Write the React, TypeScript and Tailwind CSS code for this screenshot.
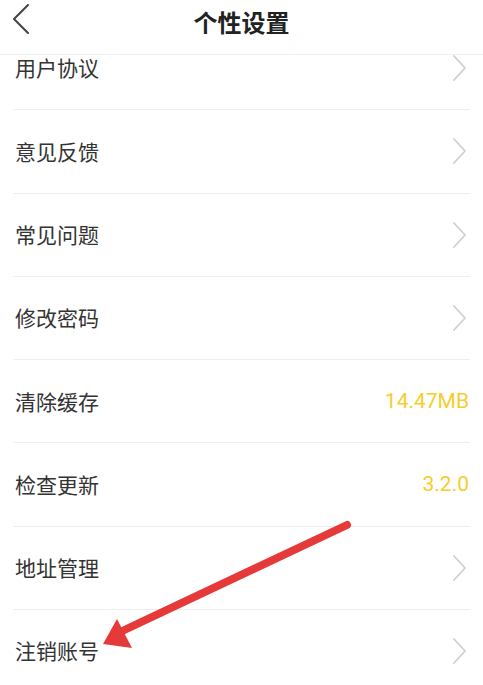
const rows = [
  { label: '用户协议' },
  { label: '意见反馈' },
  { label: '常见问题' },
  { label: '修改密码' },
  { label: '清除缓存', value: '14.47MB' },
  { label: '检查更新', value: '3.2.0' },
  { label: '地址管理' },
  { label: '注销账号' },
];

function Chevron({ left, className }: { left?: boolean; className?: string }) {
  return (
    <svg className={className} width="16" height="30" viewBox="0 0 16 30" fill="none">
      <polyline
        points={left ? '15,1 1,15 15,29' : '1,3 12,15 1,27'}
        stroke="currentColor"
        strokeWidth={left ? 2 : 1.8}
        strokeLinecap="round"
        strokeLinejoin="round"
      />
    </svg>
  );
}

export default function App() {
  return (
    <div
      className="relative w-[483px] h-[685px] bg-white overflow-hidden flex flex-col"
      style={{ fontFamily: '"Noto Sans CJK SC", Roboto, sans-serif' }}
    >
      {/* header */}
      <div className="relative z-10 h-[55px] shrink-0 flex items-center justify-center bg-white border-b border-[#f2f2f2]">
        <Chevron left className="absolute left-[13px] top-[4px] text-[#444]" />
        <h1 className="text-[24px] font-bold text-[#222] -mt-[10px]">个性设置</h1>
      </div>

      {/* list, scrolled a little */}
      <div className="flex-1 overflow-hidden">
        <div className="-mt-[28px]">
          {rows.map((row, i) => (
            <div key={row.label} className="mx-[13px]">
              <div className="h-[82.3px] flex items-center justify-between pl-[2px]">
                <span className="text-[21px] text-[#333]">{row.label}</span>
                {row.value ? (
                  <span className="text-[21px] text-[#f6cd2d] pr-[1px]" style={{ fontFamily: 'Roboto, sans-serif' }}>
                    {row.value}
                  </span>
                ) : (
                  <Chevron className="text-[#cfcfcf] mr-[1px]" />
                )}
              </div>
              {i < rows.length - 1 && <div className="h-px bg-[#efefef]" />}
            </div>
          ))}
        </div>
      </div>

      {/* annotation arrow */}
      <svg className="absolute left-0 top-0 pointer-events-none" width="483" height="685" viewBox="0 0 483 685">
        <line x1="347" y1="525" x2="118" y2="633" stroke="#e63a3a" strokeWidth="8" strokeLinecap="round" />
        <polygon points="103,644 117,619 132,648" fill="#e63a3a" />
      </svg>
    </div>
  );
}
